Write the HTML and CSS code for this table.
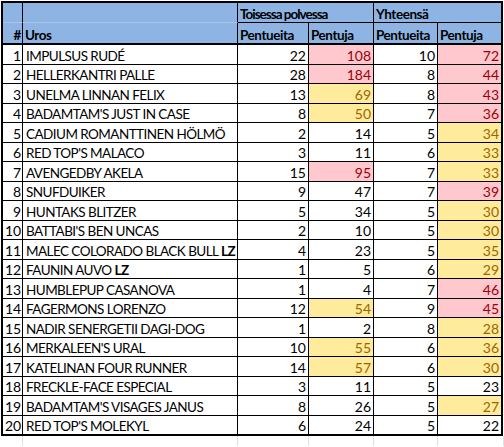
FILE: index.html
```html
<!DOCTYPE html>
<html lang="fi">
<head>
<meta charset="utf-8">
<title>Urokset</title>
<link rel="stylesheet" href="styles.css">
</head>
<body>
<div class="sheet">
<table class="grid">
<colgroup>
<col class="c-num"><col class="c-name"><col class="c-a"><col class="c-b"><col class="c-c"><col class="c-d">
</colgroup>
<thead>
<tr class="h1">
<th class="soft"></th><th class="soft"></th>
<th colspan="2" class="grp tight">Toisessa polvessa</th>
<th colspan="2" class="grp last">Yhteensä</th>
</tr>
<tr class="h2">
<th class="num">#</th><th class="name">Uros</th>
<th>Pentueita</th><th>Pentuja</th><th>Pentueita</th><th class="last">Pentuja</th>
</tr>
</thead>
<tbody>
<tr><td class="num">1</td><td class="name">IMPULSUS RUDÉ</td><td>22</td><td class="bad">108</td><td>10</td><td class="bad last">72</td></tr>
<tr><td class="num">2</td><td class="name">HELLERKANTRI PALLE</td><td>28</td><td class="bad">184</td><td>8</td><td class="bad last">44</td></tr>
<tr><td class="num">3</td><td class="name">UNELMA LINNAN FELIX</td><td>13</td><td class="mid">69</td><td>8</td><td class="bad last">43</td></tr>
<tr><td class="num">4</td><td class="name">BADAMTAM'S JUST IN CASE</td><td>8</td><td class="mid">50</td><td>7</td><td class="bad last">36</td></tr>
<tr><td class="num">5</td><td class="name">CADIUM ROMANTTINEN HÖLMÖ</td><td>2</td><td>14</td><td>5</td><td class="mid last">34</td></tr>
<tr><td class="num">6</td><td class="name">RED TOP'S MALACO</td><td>3</td><td>11</td><td>6</td><td class="mid last">33</td></tr>
<tr><td class="num">7</td><td class="name">AVENGEDBY AKELA</td><td>15</td><td class="bad">95</td><td>7</td><td class="mid last">33</td></tr>
<tr><td class="num">8</td><td class="name">SNUFDUIKER</td><td>9</td><td>47</td><td>7</td><td class="bad last">39</td></tr>
<tr><td class="num">9</td><td class="name">HUNTAKS BLITZER</td><td>5</td><td>34</td><td>5</td><td class="mid last">30</td></tr>
<tr><td class="num">10</td><td class="name">BATTABI'S BEN UNCAS</td><td>2</td><td>10</td><td>5</td><td class="mid last">30</td></tr>
<tr><td class="num">11</td><td class="name">MALEC COLORADO BLACK BULL <b>LZ</b></td><td>4</td><td>23</td><td>5</td><td class="mid last">35</td></tr>
<tr><td class="num">12</td><td class="name">FAUNIN AUVO <b>LZ</b></td><td>1</td><td>5</td><td>6</td><td class="mid last">29</td></tr>
<tr><td class="num">13</td><td class="name">HUMBLEPUP CASANOVA</td><td>1</td><td>4</td><td>7</td><td class="bad last">46</td></tr>
<tr><td class="num">14</td><td class="name">FAGERMONS LORENZO</td><td>12</td><td class="mid">54</td><td>9</td><td class="bad last">45</td></tr>
<tr><td class="num">15</td><td class="name">NADIR SENERGETII DAGI-DOG</td><td>1</td><td>2</td><td>8</td><td class="mid last">28</td></tr>
<tr><td class="num">16</td><td class="name">MERKALEEN'S URAL</td><td>10</td><td class="mid">55</td><td>6</td><td class="mid last">36</td></tr>
<tr><td class="num">17</td><td class="name">KATELINAN FOUR RUNNER</td><td>14</td><td class="mid">57</td><td>6</td><td class="mid last">30</td></tr>
<tr><td class="num">18</td><td class="name">FRECKLE-FACE ESPECIAL</td><td>3</td><td>11</td><td>5</td><td class="last">23</td></tr>
<tr><td class="num">19</td><td class="name">BADAMTAM'S VISAGES JANUS</td><td>8</td><td>26</td><td>5</td><td class="mid last">27</td></tr>
<tr><td class="num">20</td><td class="name">RED TOP'S MOLEKYL</td><td>6</td><td>24</td><td>5</td><td class="last">22</td></tr>
</tbody>
</table>
<div class="below">
<span class="g-num"></span><span class="g-name"></span><span class="g-a"></span><span class="g-b"></span><span class="g-c"></span><span class="g-d"></span>
</div>
</div>
</body>
</html>
```
FILE: styles.css
```css
html, body {
  margin: 0;
  padding: 0;
  background: #ffffff;
}
body {
  font-family: Lato, "Open Sans", "Liberation Sans", sans-serif;
  font-size: 14px;
  color: #000000;
}
.sheet {
  padding: 1px 0 0 1px;
  width: 503px;
}
.grid {
  table-layout: fixed;
  border-collapse: separate;
  border-spacing: 0;
  border: 2px solid #000000;
  width: 502px;
}
.c-num { width: 20px; }
.c-name { width: 215px; }
.c-a { width: 71px; }
.c-b { width: 65px; }
.c-c { width: 64px; }
.c-d { width: 63px; }

.grid th,
.grid td {
  padding: 0 2px 0 2px;
  border-right: 1px solid #000000;
  border-bottom: 1px solid #000000;
  white-space: nowrap;
  overflow: hidden;
  vertical-align: bottom;
  line-height: 16px;
  text-align: right;
}
.grid th {
  background: #8db4e2;
  font-weight: bold;
  text-align: left;
  font-size: 13.5px;
  letter-spacing: -0.45px;
}
.grid th.tight { letter-spacing: -1px; }
.grid .last { border-right: 0; }
.grid .h1 th { height: 19px; }
.grid .h1 th.soft { border-bottom-color: #a9c4e8; }
.grid .h2 th { height: 20px; border-bottom-width: 2px; }
.grid .h2 th.num { text-align: right; padding-right: 1px; }
.grid tbody tr:nth-child(odd) td { height: 19px; }
.grid tbody tr:nth-child(even) td { height: 18px; }
.grid tbody tr:last-child td { border-bottom: 0; }
.grid td.num { padding-right: 1px; }
.grid td.name {
  text-align: left;
  padding-left: 3px;
  font-size: 13.5px;
  letter-spacing: -0.55px;
}
.grid td.bad { background: #ffc7ce; color: #9c0006; }
.grid td.mid { background: #ffeb9c; color: #9c6500; }

.below {
  display: flex;
  height: 10px;
  padding-left: 2px;
}
.below span { border-right: 1px solid #e0e0e0; }
.g-num { width: 19px; }
.g-name { width: 214px; }
.g-a { width: 70px; }
.g-b { width: 64px; }
.g-c { width: 63px; }
.g-d { width: 65px; }
```
